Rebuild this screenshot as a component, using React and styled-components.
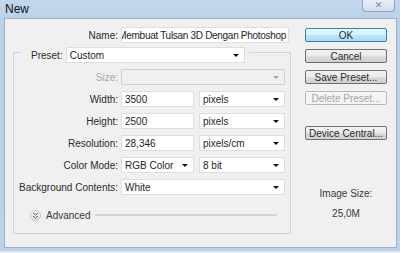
import React from "react";
import styled, { createGlobalStyle } from "styled-components";

const Global = createGlobalStyle`
  html, body { margin: 0; padding: 0; background: #e9edf2; }
  body { font-family: "Liberation Sans", Arial, sans-serif; font-size: 10px; color: #2b2b2b; }
  * { box-sizing: border-box; }
`;

const Window = styled.div`
  width: 400px;
  height: 251px;
  background: linear-gradient(#c2d7ed, #b9d0e9 30px, #bcd2ea);
  display: flex;
  flex-direction: column;
  padding: 0 3px 3px 4px;
`;

const TitleBar = styled.div`
  height: 18px;
  display: flex;
  align-items: flex-start;
  justify-content: space-between;
`;

const Title = styled.div`
  font-family: "Liberation Sans", sans-serif;
  font-size: 12px;
  color: #111;
  padding: 2px 0 0 1px;
`;

const CloseBtn = styled.div`
  width: 33px;
  height: 12px;
  margin-right: 2px;
  border: 1px solid #8fa3ba;
  border-top: none;
  border-radius: 0 0 4px 4px;
  background: linear-gradient(#e8eef6, #d3dfed);
  display: flex;
  align-items: center;
  justify-content: center;
  color: #7d8b9b;
  font-family: "DejaVu Sans", sans-serif;
  font-size: 9px;
  line-height: 1;
`;

const Body = styled.div`
  flex: 1;
  background: #f0f0f0;
  border: 1px solid #9cb0c6;
  display: flex;
  padding-top: 8px;
`;

const LeftCol = styled.div`
  width: 286px;
  display: flex;
  flex-direction: column;
`;

const Row = styled.div`
  display: flex;
  align-items: center;
  height: 16px;
  margin-top: ${(p) => p.$mt || 0}px;
`;

const Label = styled.div`
  width: ${(p) => p.$w}px;
  text-align: right;
  padding-right: 3px;
  white-space: nowrap;
  color: ${(p) => (p.$disabled ? "#a8a8a8" : "#2b2b2b")};
`;

const TextBox = styled.div`
  width: ${(p) => p.$w}px;
  height: 16px;
  background: #fff;
  border: 1px solid #dedede;
  display: flex;
  align-items: center;
  justify-content: ${(p) => (p.$end ? "flex-end" : "flex-start")};
  padding: 0 ${(p) => (p.$end ? 2 : 3)}px 0 3px;
  overflow: hidden;
  white-space: nowrap;
  letter-spacing: ${(p) => (p.$end ? "-0.3px" : "normal")};
  color: #1e1e1e;
`;

const Select = styled.div`
  width: ${(p) => p.$w}px;
  height: 16px;
  margin-left: ${(p) => p.$ml || 0}px;
  background: ${(p) => (p.$disabled ? "#f0f0f0" : "#fff")};
  border: 1px solid ${(p) => (p.$disabled ? "#cfcfcf" : "#dedede")};
  display: flex;
  align-items: center;
  padding: 0 5px 0 3px;
  white-space: nowrap;
  color: #1e1e1e;
  &::after {
    content: "";
    margin-left: auto;
    border-left: 3px solid transparent;
    border-right: 3px solid transparent;
    border-top: 3px solid ${(p) => (p.$disabled ? "#a8a8a8" : "#111")};
  }
`;

const Group = styled.div`
  margin: 9px 0 0 8px;
  width: 278px;
  height: 182px;
  border: 1px solid #d2d2d2;
  display: flex;
  flex-direction: column;
`;

const Legend = styled.div`
  margin: -6px 0 0 7px;
  padding: 0 4px 0 10px;
  background: #f0f0f0;
  align-self: flex-start;
  display: flex;
  align-items: center;
  height: 16px;
`;

const LegendLabel = styled.span`
  padding-right: 3px;
`;

const AdvancedRow = styled.div`
  display: flex;
  align-items: center;
  margin: 14px 13px 0 16px;
  height: 12px;
`;

const Chevron = styled.div`
  width: 11px;
  height: 11px;
  border-radius: 50%;
  border: 1px solid #c4c4c4;
  background: linear-gradient(#fdfdfd, #e4e4e4);
  display: flex;
  align-items: center;
  justify-content: center;
`;

const AdvText = styled.span`
  margin-left: 5px;
  color: #3a3a3a;
`;

const Line = styled.div`
  flex: 1;
  height: 2px;
  margin-left: 5px;
  background: #d4d4d4;
`;

const RightCol = styled.div`
  margin-left: 14px;
  padding-top: 1px;
  display: flex;
  flex-direction: column;
  width: 82px;
`;

const Button = styled.div`
  height: 14px;
  margin-top: ${(p) => p.$mt || 0}px;
  border: 1px solid ${(p) => (p.$primary ? "#3c7fb1" : p.$disabled ? "#b5b9bc" : "#707070")};
  border-radius: 2px;
  background: ${(p) =>
    p.$primary
      ? "linear-gradient(#eaf6fd 0%, #d9f0fc 50%, #bee6fd 51%, #a7d9f5 100%)"
      : p.$disabled
      ? "#f4f4f4"
      : "linear-gradient(#f2f2f2 0%, #ebebeb 50%, #dddddd 51%, #cfcfcf 100%)"};
  color: ${(p) => (p.$disabled ? "#a6a6a6" : "#2b2b2b")};
  display: flex;
  align-items: center;
  justify-content: center;
  white-space: nowrap;
`;

const Info = styled.div`
  text-align: center;
  margin-top: ${(p) => p.$mt}px;
  color: #3a3a3a;
  line-height: 12px;
`;

export default function App() {
  return (
    <>
      <Global />
      <Window>
        <TitleBar>
          <Title>New</Title>
          <CloseBtn>✕</CloseBtn>
        </TitleBar>
        <Body>
          <LeftCol>
            <Row>
              <Label $w={116}>Name:</Label>
              <TextBox $w={168} $end>
                <span>Membuat Tulsan 3D Dengan Photoshop</span>
              </TextBox>
            </Row>
            <Group>
              <Legend>
                <LegendLabel>Preset:</LegendLabel>
                <Select $w={179}>Custom</Select>
              </Legend>
              <Row $mt={6}>
                <Label $w={107} $disabled>Size:</Label>
                <Select $w={164} $disabled></Select>
              </Row>
              <Row $mt={6}>
                <Label $w={107}>Width:</Label>
                <TextBox $w={73}>3500</TextBox>
                <Select $w={86} $ml={5}>pixels</Select>
              </Row>
              <Row $mt={6}>
                <Label $w={107}>Height:</Label>
                <TextBox $w={73}>2500</TextBox>
                <Select $w={86} $ml={5}>pixels</Select>
              </Row>
              <Row $mt={6}>
                <Label $w={107}>Resolution:</Label>
                <TextBox $w={73}>28,346</TextBox>
                <Select $w={86} $ml={5}>pixels/cm</Select>
              </Row>
              <Row $mt={6}>
                <Label $w={107}>Color Mode:</Label>
                <Select $w={73}>RGB Color</Select>
                <Select $w={86} $ml={5}>8 bit</Select>
              </Row>
              <Row $mt={6}>
                <Label $w={107}>Background Contents:</Label>
                <Select $w={164}>White</Select>
              </Row>
              <AdvancedRow>
                <Chevron>
                  <svg width="7" height="7" viewBox="0 0 7 7">
                    <path d="M1 1 L3.5 3 L6 1 M1 4 L3.5 6 L6 4" fill="none" stroke="#555" strokeWidth="1" />
                  </svg>
                </Chevron>
                <AdvText>Advanced</AdvText>
                <Line />
              </AdvancedRow>
            </Group>
          </LeftCol>
          <RightCol>
            <Button $primary>OK</Button>
            <Button $mt={7}>Cancel</Button>
            <Button $mt={7}>Save Preset...</Button>
            <Button $mt={7} $disabled>Delete Preset...</Button>
            <Button $mt={21}>Device Central...</Button>
            <Info $mt={48}>Image Size:</Info>
            <Info $mt={8}>25,0M</Info>
          </RightCol>
        </Body>
      </Window>
    </>
  );
}
